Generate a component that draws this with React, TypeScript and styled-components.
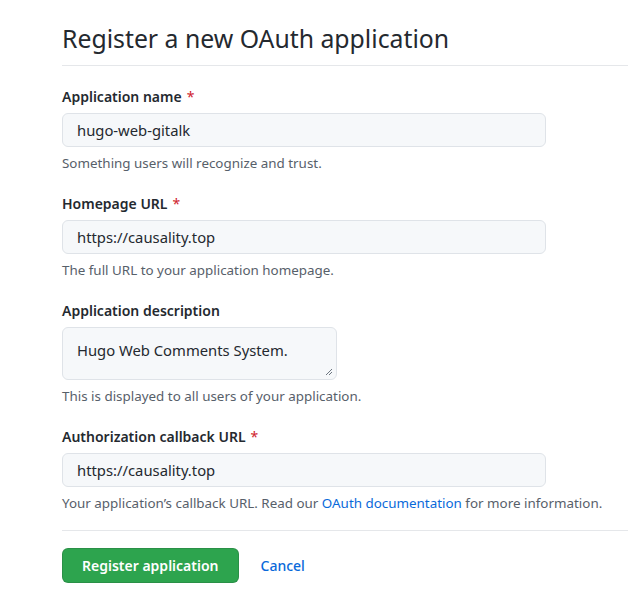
import React from "react";
import styled, { createGlobalStyle } from "styled-components";

const Global = createGlobalStyle`
  html, body { margin: 0; padding: 0; background: #ffffff; }
  body { font-family: "Noto Sans", "Open Sans", sans-serif; color: #24292f; }
  * { box-sizing: border-box; }
`;

const Page = styled.div`
  padding: 20px 0 0 62px;
  width: 628px;
`;

const Header = styled.div`
  border-bottom: 1px solid #e5e7ea;
  padding-bottom: 9px;
  margin-bottom: 21px;
`;

const Title = styled.h1`
  margin: 0;
  font-size: 24.8px;
  font-weight: 400;
  line-height: 36px;
  color: #24292f;
`;

const Group = styled.div`
  display: flex;
  flex-direction: column;
  margin-bottom: 21px;
`;

const Label = styled.label`
  font-size: 14px;
  font-weight: 600;
  line-height: 20px;
  color: #24292f;
  margin-bottom: 6px;
`;

const Required = styled.span`
  color: #cf222e;
  font-weight: 400;
  margin-left: 5px;
`;

const Field = styled.div<{ $w: number; $h: number; $top?: number }>`
  width: ${(p) => p.$w}px;
  height: ${(p) => p.$h}px;
  background: #f6f8fa;
  border: 1px solid #dfe3e8;
  border-radius: 6px;
  padding: ${(p) => p.$top ?? 6}px 14px 0;
  font-size: 14.8px;
  line-height: 20px;
  color: #24292f;
  position: relative;
`;

const Grip = styled.svg`
  position: absolute;
  right: 3px;
  bottom: 3px;
`;

const Hint = styled.p`
  margin: 6px 0 0;
  font-size: 13.4px;
  line-height: 20px;
  color: #57606a;
`;

const Link = styled.a`
  color: #0969da;
  text-decoration: none;
`;

const Footer = styled.div`
  border-top: 1px solid #e5e7ea;
  margin-top: -4px;
  padding-top: 17px;
  display: flex;
  align-items: center;
  gap: 22px;
`;

const Primary = styled.button`
  height: 35px;
  padding: 0 19px;
  background: #2da44e;
  border: 1px solid rgba(27, 31, 36, 0.15);
  border-radius: 6px;
  color: #ffffff;
  font-family: inherit;
  font-size: 14px;
  font-weight: 600;
`;

const Cancel = styled.a`
  color: #0969da;
  font-size: 14px;
  font-weight: 500;
  text-decoration: none;
`;

export default function App() {
  return (
    <>
      <Global />
      <Page>
        <Header>
          <Title>Register a new OAuth application</Title>
        </Header>
        <Group>
          <Label>
            Application name<Required>*</Required>
          </Label>
          <Field $w={484} $h={34}>hugo-web-gitalk</Field>
          <Hint>Something users will recognize and trust.</Hint>
        </Group>
        <Group>
          <Label>
            Homepage URL<Required>*</Required>
          </Label>
          <Field $w={484} $h={34}>https://causality.top</Field>
          <Hint>The full URL to your application homepage.</Hint>
        </Group>
        <Group>
          <Label>Application description</Label>
          <Field $w={275} $h={53} $top={12}>
            Hugo Web Comments System.
            <Grip width="8" height="8" viewBox="0 0 8 8">
              <path d="M7 1 L1 7 M7 4 L4 7" stroke="#6e7781" strokeWidth="1" />
            </Grip>
          </Field>
          <Hint>This is displayed to all users of your application.</Hint>
        </Group>
        <Group>
          <Label>
            Authorization callback URL<Required>*</Required>
          </Label>
          <Field $w={484} $h={34}>https://causality.top</Field>
          <Hint>
            Your application’s callback URL. Read our <Link>OAuth documentation</Link> for more
            information.
          </Hint>
        </Group>
        <Footer>
          <Primary>Register application</Primary>
          <Cancel>Cancel</Cancel>
        </Footer>
      </Page>
    </>
  );
}
